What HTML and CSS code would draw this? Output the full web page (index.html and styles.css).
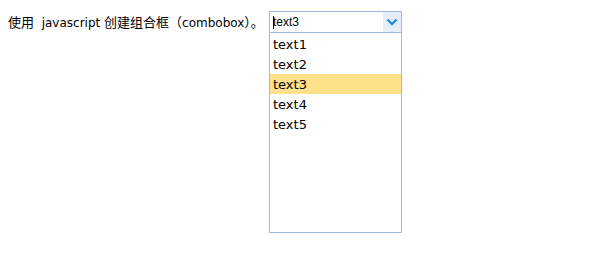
FILE: index.html
```html
<!DOCTYPE html>
<html><head><title>combobox</title>
<meta charset="utf-8">
<link rel="stylesheet" href="styles.css">
</head>
<body>
<div class="row">
	<span class="label"><span class="zh">使用</span> &nbsp;javascript <span class="zh">创建组合框（</span>combobox<span class="zh">）。</span></span>
	<div class="combo">
		<div class="combo-input">
			<span class="caret"></span><span class="value">text3</span>
			<span class="combo-btn">
				<svg width="12" height="8" viewBox="0 0 12 8"><path d="M1.5 1.5 L6 6 L10.5 1.5" fill="none" stroke="#2b8ae2" stroke-width="2.4"/></svg>
			</span>
		</div>
		<ul class="combo-list">
			<li>text1</li>
			<li>text2</li>
			<li class="selected">text3</li>
			<li>text4</li>
			<li>text5</li>
		</ul>
	</div>
</div>
</body></html>
```
FILE: styles.css
```css
body {
	margin: 0;
	padding: 11px 8px;
	font-family: "DejaVu Sans", Verdana, "Noto Sans CJK SC", sans-serif;
	font-size: 12px;
	color: #000;
	background: #fff;
}
.row {
	display: flex;
	align-items: flex-start;
}
.label {
	width: 261px;
	line-height: 22px;
	white-space: nowrap;
}
.zh {
	font-family: "Noto Sans CJK SC", sans-serif;
	font-size: 13px;
}
.combo {
	width: 133px;
}
.combo-input {
	display: flex;
	align-items: center;
	height: 20px;
	border: 1px solid #9ab9e6;
	font-family: "Liberation Sans", Arial, sans-serif;
	font-size: 12px;
}
.caret {
	width: 1px;
	height: 13px;
	background: #000;
	margin-left: 3px;
}
.value {
	flex: 1;
	margin-left: -1px;
}
.combo-btn {
	width: 18px;
	height: 20px;
	background: #e6eefa;
	display: flex;
	align-items: center;
	justify-content: center;
}
.combo-list {
	list-style: none;
	margin: 0;
	padding: 1px 0 0 0;
	height: 198px;
	border: 1px solid #9ab9e6;
	border-top: none;
	font-size: 13px;
}
.combo-list li {
	height: 20px;
	line-height: 21px;
	padding-left: 3px;
}
.combo-list li.selected {
	background: #ffe18c;
}
```
